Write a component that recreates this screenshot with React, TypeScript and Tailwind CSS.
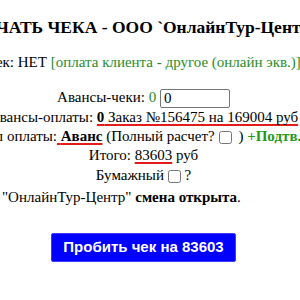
const App = () => {
  const total = 83603;
  const redLine =
    "underline decoration-[#e21b1b] decoration-2 underline-offset-[2px] [text-decoration-skip-ink:none]";

  return (
    <div className="w-[287px] flex flex-col items-center text-[15px] text-black font-['Liberation_Serif',serif]">
      <h3 className="whitespace-nowrap text-[17.5px] font-bold h-[20px] leading-[20px] mt-[17px]">
        ПЕЧАТЬ ЧЕКА - ООО `ОнлайнТур-Центр`
      </h3>

      <div className="whitespace-nowrap h-[19px] leading-[19px] mt-[16px]">
        Чек: НЕТ <span className="text-[#2a8c2a]">[оплата клиента - другое (онлайн экв.)]</span>
      </div>

      <div className="whitespace-nowrap h-[19px] leading-[19px] mt-[16px]">
        Авансы-чеки: <span className="text-[#2a8c2a]">0</span>{" "}
        <input
          type="text"
          defaultValue="0"
          className="align-middle w-[70px] h-[19px] border border-[#767676] rounded-[2px] px-[3px] text-[15px] leading-[17px] outline-none"
        />
      </div>

      <div className="whitespace-nowrap h-[20px] leading-[20px]">
        Авансы-оплаты:{" "}
        <span className={redLine}>
          <b>0</b> Заказ №156475 на 169004 руб
        </span>
      </div>

      <div className="whitespace-nowrap h-[19px] leading-[19px]">
        Тип оплаты:
        <span className={redLine}>
          {" "}
          <b>Аванс</b>
        </span>{" "}
        (Полный расчет?
        <input type="checkbox" className="align-middle ml-[4px] mr-[3px]" /> ){" "}
        <b className="text-[#1f9a1f]">+Подтв...</b>
      </div>

      <div className="whitespace-nowrap h-[19px] leading-[19px]">
        Итого: <span className={redLine}>{total}</span> руб
      </div>

      <div className="whitespace-nowrap h-[20px] leading-[20px]">
        Бумажный <input type="checkbox" className="align-middle" /> ?
      </div>

      <div className="self-start whitespace-nowrap h-[20px] leading-[20px] mt-[2px] pl-[2px]">
        "ОнлайнТур-Центр" <b>смена открыта</b>.
      </div>

      <button className="mt-[26px] w-[185px] h-[29px] bg-[#0000ff] border border-[#3d3dff] rounded-[2px] text-white font-bold text-[15px] font-['Liberation_Sans',Arial,sans-serif]">
        Пробить чек на {total}
      </button>
    </div>
  );
};

export default App;
